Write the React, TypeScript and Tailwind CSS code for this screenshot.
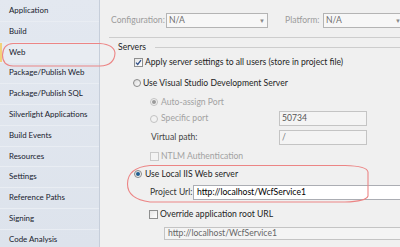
import React from "react";

const navItems = [
  "Application",
  "Build",
  "Web",
  "Package/Publish Web",
  "Package/Publish SQL",
  "Silverlight Applications",
  "Build Events",
  "Resources",
  "Settings",
  "Reference Paths",
  "Signing",
  "Code Analysis",
];

const CheckBox = ({ checked = false, disabled = false }: { checked?: boolean; disabled?: boolean }) => (
  <span
    className={`flex h-[9px] w-[9px] shrink-0 items-center justify-center border ${
      disabled ? "border-[#c9c9c9] bg-[#f3f3f3]" : "border-[#8e8f8f] bg-gradient-to-br from-[#e6e6e6] to-white"
    }`}
  >
    {checked && (
      <svg width="7" height="7" viewBox="0 0 7 7">
        <path d="M1 3.6 L2.7 5.4 L6 1.2" stroke="#31518a" strokeWidth="1.3" fill="none" />
      </svg>
    )}
  </span>
);

const Radio = ({ checked = false, disabled = false }: { checked?: boolean; disabled?: boolean }) => (
  <span
    className={`flex h-[8px] w-[8px] shrink-0 items-center justify-center rounded-full border ${
      disabled ? "border-[#c2c2c2] bg-[#f2f2f2]" : "border-[#8a8a8a] bg-gradient-to-br from-[#d9d9d9] to-white"
    }`}
  >
    {checked && (
      <span
        className={`h-[4px] w-[4px] rounded-full ${disabled ? "bg-[#9a9a9a]" : "bg-[#1f5d8f]"}`}
      />
    )}
  </span>
);

const Dropdown = ({ className }: { className: string }) => (
  <div className={`flex h-full items-center border border-[#b4b4b4] bg-[#f7f7f7] ${className}`}>
    <span className="ml-[2px] flex-1 text-[#6d6d6d]">N/A</span>
    <span className="mr-[2px] text-[6px] text-[#8a8a8a]">▼</span>
  </div>
);

export default function App() {
  return (
    <div className="relative flex h-[247px] w-[400px] overflow-hidden bg-[#f0f0f0] font-['Lato',sans-serif] text-[8.6px] leading-none text-[#1e1e1e]">
      {/* left navigation */}
      <div className="w-[100px] shrink-0 border-r border-[#c6ceda] bg-gradient-to-b from-[#e3e8f0] to-[#dde3ec] pt-[1px] text-[7.9px]">
        {navItems.map((item) => (
          <div
            key={item}
            className={`relative flex h-[20.8px] items-center border-b border-[#e9edf3] pl-[9px] text-[#18212d] ${
              item === "Web" ? "bg-[#e8ecf2]" : ""
            }`}
          >
            {item === "Web" && <span className="absolute left-0 top-0 h-full w-[2px] bg-[#f2d27a]" />}
            {item}
          </div>
        ))}
      </div>

      {/* settings panel */}
      <div className="flex flex-1 flex-col pt-[13px]">
        <div className="flex h-[15px] items-center">
          <span className="ml-[11px] w-[55px] text-[#9c9c9c]">Configuration:</span>
          <Dropdown className="w-[102px]" />
          <span className="ml-[17px] w-[38px] text-[#9c9c9c]">Platform:</span>
          <Dropdown className="-mr-[4px] flex-1" />
        </div>

        <div className="ml-[9px] mt-[9px] h-px bg-[#cdcdcd]" />

        <div className="mt-[3px] flex h-[12px] items-center">
          <span className="ml-[18px]">Servers</span>
          <span className="ml-[9px] h-px flex-1 bg-[#cdcdcd]" />
        </div>

        <div className="mt-[2px] flex h-[14px] items-center">
          <span className="ml-[34px]">
            <CheckBox checked />
          </span>
          <span className="ml-[2px]">Apply server settings to all users (store in project file)</span>
        </div>

        <div className="mt-[7px] flex h-[14px] items-center">
          <span className="ml-[33px]">
            <Radio />
          </span>
          <span className="ml-[2px]">Use Visual Studio Development Server</span>
        </div>

        <div className="mt-[5px] flex h-[14px] items-center">
          <span className="ml-[50px]">
            <Radio checked disabled />
          </span>
          <span className="ml-[3px] text-[#a2a2a2]">Auto-assign Port</span>
        </div>

        <div className="mt-[2px] flex h-[15px] items-center">
          <div className="flex w-[179px] items-center pl-[50px]">
            <Radio disabled />
            <span className="ml-[3px] text-[#a2a2a2]">Specific port</span>
          </div>
          <div className="flex h-full w-[88px] items-center border border-[#c4c4c4] bg-[#f4f4f4] pl-[2px] text-[#555]">
            50734
          </div>
        </div>

        <div className="mt-[4px] flex h-[15px] items-center">
          <div className="w-[179px] pl-[51px] text-[#444]">Virtual path:</div>
          <div className="flex h-full w-[88px] items-center border border-[#c4c4c4] bg-[#f4f4f4] pl-[2px] text-[#777]">
            /
          </div>
        </div>

        <div className="mt-[4px] flex h-[14px] items-center">
          <span className="ml-[50px]">
            <CheckBox disabled />
          </span>
          <span className="ml-[2px] text-[#a2a2a2]">NTLM Authentication</span>
        </div>

        <div className="mt-[4px] flex h-[14px] items-center">
          <span className="ml-[34px]">
            <Radio checked />
          </span>
          <span className="ml-[3px]">Use Local IIS Web server</span>
        </div>

        <div className="mt-[4px] flex h-[15px] items-center">
          <div className="w-[93px] pl-[50px] text-[#333]">Project Url:</div>
          <div className="flex h-full flex-1 items-center border border-r-0 border-[#abadb3] bg-white pl-[3px] text-black">
            http://localhost/WcfService1
          </div>
        </div>

        <div className="mt-[7px] flex h-[14px] items-center">
          <span className="ml-[49px]">
            <CheckBox />
          </span>
          <span className="ml-[2px]">Override application root URL</span>
        </div>

        <div className="ml-[64px] mt-[6px] flex h-[13px] items-center border border-r-0 border-[#c4c4c4] bg-[#f4f4f4] pl-[3px] text-[#666]">
          http://localhost/WcfService1
        </div>
      </div>

      {/* hand-drawn annotation rings */}
      <svg className="pointer-events-none absolute inset-0" width="400" height="247" viewBox="0 0 400 247">
        <path
          d="M13 43.5 L100 43.5 Q114 44.5 115 53 Q114.5 65.5 100 66 L13 66 Q2.5 65.5 2.5 55 Q3 44 13 43.5 Z"
          stroke="#ec8585"
          strokeWidth="1.1"
          fill="none"
        />
        <path
          d="M150 165.5 L345 165.5 Q367 166 368 172 L368 196 Q366 201.5 345 202 L150 202 Q127.5 199 127.5 184 Q127.5 167.5 150 165.5 Z"
          stroke="#ec8585"
          strokeWidth="1.1"
          fill="none"
        />
      </svg>
    </div>
  );
}
